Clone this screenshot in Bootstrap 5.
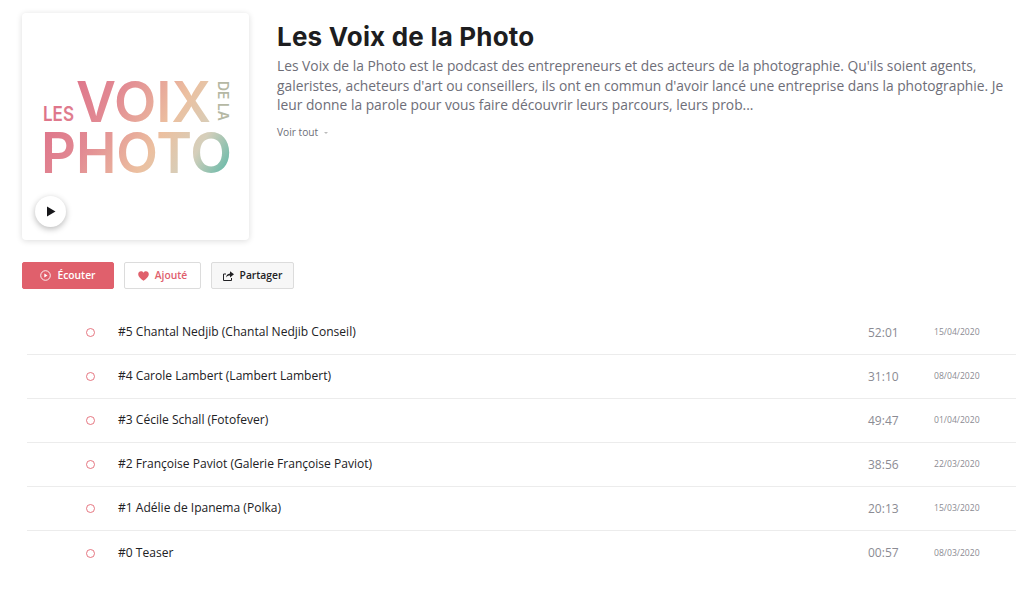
<!DOCTYPE html>
<html lang="fr">

<head>
  <meta charset="UTF-8" />
  <meta name="viewport" content="width=device-width, initial-scale=1.0" />
  <title>Les Voix de la Photo</title>
  <link href="https://cdn.jsdelivr.net/npm/bootstrap@5.3.0/dist/css/bootstrap.min.css" rel="stylesheet">
  <style>
    body {
      background-color: #fff;
      font-family: "Open Sans", sans-serif;
      color: #212124;
      overflow: hidden;
    }

    .page-wrap {
      padding: 13px 14px 0 22px;
    }

    .cover-box {
      width: 227px;
      height: 227px;
      flex: none;
      background: #fff;
      border-radius: 4px;
      box-shadow: 0 1px 6px rgba(0, 0, 0, 0.14);
      margin-right: 28px;
    }

    .cover-box svg.cover-logo {
      display: block;
    }

    .cover-play {
      position: absolute;
      left: 13px;
      bottom: 13px;
      width: 31px;
      height: 31px;
      border-radius: 50%;
      background: #fff;
      box-shadow: 0 2px 6px rgba(0, 0, 0, 0.28);
    }

    .show-title {
      font-family: Inter, sans-serif;
      font-weight: 700;
      font-size: 26px;
      line-height: 32px;
      color: #1d1d20;
      margin: 8px 0 3px;
      letter-spacing: 0.2px;
    }

    .show-desc {
      font-size: 13.8px;
      line-height: 19.6px;
      color: #6e6e78;
      margin: 0;
    }

    .see-all {
      font-size: 10.2px;
      color: #6e6e78;
      margin-top: 9px;
      line-height: 16px;
    }

    .see-all i {
      display: inline-block;
      width: 0;
      height: 0;
      margin-left: 3px;
      vertical-align: 2px;
      border-left: 2px solid transparent;
      border-right: 2px solid transparent;
      border-top: 2px solid #bbb;
    }

    .action-row {
      margin-top: 22px;
      gap: 10px;
    }

    .action-btn {
      height: 27px;
      font-size: 10.3px;
      font-weight: 600;
      border-radius: 2px;
      padding: 0;
      gap: 6px;
      display: flex;
      align-items: center;
      justify-content: center;
    }

    .btn-listen {
      width: 92px;
      background: #e0606c;
      border: 1px solid #e0606c;
      color: #fff;
    }

    .btn-added {
      width: 77px;
      background: #fff;
      border: 1px solid #dcdcdc;
      color: #e0606c;
    }

    .btn-share {
      width: 83px;
      background: #f7f7f7;
      border: 1px solid #dcdcdc;
      color: #212124;
    }

    .episode-list {
      margin: 22px 0 0 5px;
    }

    .episode-row {
      height: 44px;
      border-bottom: 1px solid #ececec;
      font-size: 12.05px;
      color: #212124;
    }

    .episode-row:last-child {
      border-bottom: 0;
    }

    .ep-dot {
      width: 9px;
      height: 9px;
      border: 1px solid #e0606c;
      opacity: 0.85;
      border-radius: 50%;
      margin-left: 59px;
      margin-right: 23px;
      flex: none;
    }

    .ep-title {
      flex: 1;
    }

    .ep-time {
      width: 66px;
      flex: none;
      font-size: 12px;
      color: #8b8b93;
    }

    .ep-date {
      width: 82px;
      flex: none;
      font-size: 8.6px;
      color: #8b8b93;
    }
  </style>
</head>

<body>
  <div class="page-wrap">
    <div class="d-flex">
      <div class="cover-box position-relative">
        <svg class="cover-logo" width="227" height="227" viewBox="22 13 227 227" font-family="Inter, sans-serif" font-weight="600">
          <defs>
            <linearGradient id="logoGrad" gradientUnits="userSpaceOnUse" x1="60" y1="75" x2="225" y2="180">
              <stop offset="0" stop-color="#dd6f88" />
              <stop offset="0.3" stop-color="#e28a93" />
              <stop offset="0.6" stop-color="#ecc0a0" />
              <stop offset="0.8" stop-color="#d5cfbb" />
              <stop offset="1" stop-color="#5fb8a8" />
            </linearGradient>
          </defs>
          <text x="43" y="121" font-size="20" textLength="31" lengthAdjust="spacingAndGlyphs" fill="url(#logoGrad)">LES</text>
          <text x="76" y="122" font-size="56" textLength="135" lengthAdjust="spacingAndGlyphs" fill="url(#logoGrad)">VOIX</text>
          <text transform="translate(218 81) rotate(90)" font-size="14" textLength="40" lengthAdjust="spacingAndGlyphs" fill="#b5b8a4">DE LA</text>
          <text x="41" y="173" font-size="56" textLength="191" lengthAdjust="spacingAndGlyphs" fill="url(#logoGrad)">PHOTO</text>
        </svg>
        <div class="cover-play d-flex align-items-center justify-content-center">
          <svg width="10" height="11" viewBox="0 0 10 11"><path d="M1 0.5v10l8.500-5z" fill="#17171a" /></svg>
        </div>
      </div>
      <div>
        <h1 class="show-title">Les Voix de la Photo</h1>
        <p class="show-desc">Les Voix de la Photo est le podcast des entrepreneurs et des acteurs de la photographie. Qu'ils soient agents, galeristes, acheteurs d'art ou conseillers, ils ont en commun d'avoir lancé une entreprise dans la photographie. Je leur donne la parole pour vous faire découvrir leurs parcours, leurs prob...</p>
        <div class="see-all">Voir tout <i></i></div>
      </div>
    </div>

    <div class="d-flex action-row">
      <button class="btn action-btn btn-listen">
        <svg width="11" height="11" viewBox="0 0 11 11"><circle cx="5.500" cy="5.500" r="4.800" fill="none" stroke="#fff" stroke-width="0.9" /><path d="M4.300 3.400v4.200l3.200-2.100z" fill="#fff" /></svg>
        Écouter
      </button>
      <button class="btn action-btn btn-added">
        <svg width="11" height="10" viewBox="0 0 11 10"><path d="M5.500 9.800C2.400 7.600.2 5.800.2 3.300.2 1.500 1.500.3 3 .3c1 0 1.900.5 2.500 1.400C6.100.8 7 .3 8 .3c1.500 0 2.800 1.200 2.800 3 0 2.500-2.200 4.300-5.300 6.500z" fill="#e0606c" /></svg>
        Ajouté
      </button>
      <button class="btn action-btn btn-share">
        <svg width="11" height="10" viewBox="0 0 11 10"><path d="M.5 3h2.500M.5 3v6.500h8V7" fill="none" stroke="#212124" stroke-width="1" /><path d="M7 .2l4 3.100-4 3.100V4.600c-1.800 0-3 .5-4 2 .2-2.300 1.500-3.900 4-4.200z" fill="#212124" /></svg>
        Partager
      </button>
    </div>

    <div class="episode-list" id="episodes"></div>
  </div>

  <script>
    const episodes = [
      ['#5 Chantal Nedjib (Chantal Nedjib Conseil)', '52:01', '15/04/2020'],
      ['#4 Carole Lambert (Lambert Lambert)', '31:10', '08/04/2020'],
      ['#3 Cécile Schall (Fotofever)', '49:47', '01/04/2020'],
      ['#2 Françoise Paviot (Galerie Françoise Paviot)', '38:56', '22/03/2020'],
      ['#1 Adélie de Ipanema (Polka)', '20:13', '15/03/2020'],
      ['#0 Teaser', '00:57', '08/03/2020']
    ];

    document.getElementById('episodes').innerHTML = episodes.map(e => `
      <div class="episode-row d-flex align-items-center">
        <span class="ep-dot"></span>
        <span class="ep-title">${e[0]}</span>
        <span class="ep-time">${e[1]}</span>
        <span class="ep-date">${e[2]}</span>
      </div>`).join('');
  </script>
  <script src="https://cdn.jsdelivr.net/npm/bootstrap@5.3.0/dist/js/bootstrap.bundle.min.js"></script>
</body>

</html>
